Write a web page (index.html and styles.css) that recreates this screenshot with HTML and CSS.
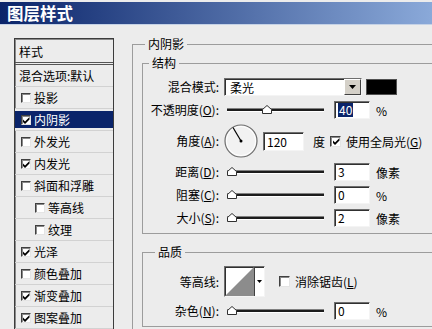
FILE: index.html
```html
<!DOCTYPE html>
<html lang="zh-CN">
<head>
    <meta charset="UTF-8">
    <meta name="viewport" content="width=device-width, initial-scale=1.0">
    <title>图层样式</title>
    <link rel="stylesheet" href="styles.css">
</head>
<body>
    <div class="titlebar">图层样式</div>

    <div class="dialog">
        <!-- left: list of effects -->
        <div class="styles-list">
            <div class="list-head">样式</div>
            <div class="list-item blend">混合选项:默认</div>
            <div class="list-item"><span class="check"></span>投影</div>
            <div class="list-item selected"><span class="check on"><svg width="7" height="7" viewBox="0 0 7 7"><path d="M0 2.5 L2 4.5 L6.5 0 L6.5 2.5 L2 7 L0 5 Z"/></svg></span>内阴影</div>
            <div class="list-item"><span class="check"></span>外发光</div>
            <div class="list-item"><span class="check on"><svg width="7" height="7" viewBox="0 0 7 7"><path d="M0 2.5 L2 4.5 L6.5 0 L6.5 2.5 L2 7 L0 5 Z"/></svg></span>内发光</div>
            <div class="list-item"><span class="check"></span>斜面和浮雕</div>
            <div class="list-item sub"><span class="check"></span>等高线</div>
            <div class="list-item sub"><span class="check"></span>纹理</div>
            <div class="list-item"><span class="check on"><svg width="7" height="7" viewBox="0 0 7 7"><path d="M0 2.5 L2 4.5 L6.5 0 L6.5 2.5 L2 7 L0 5 Z"/></svg></span>光泽</div>
            <div class="list-item"><span class="check"></span>颜色叠加</div>
            <div class="list-item"><span class="check on"><svg width="7" height="7" viewBox="0 0 7 7"><path d="M0 2.5 L2 4.5 L6.5 0 L6.5 2.5 L2 7 L0 5 Z"/></svg></span>渐变叠加</div>
            <div class="list-item"><span class="check on"><svg width="7" height="7" viewBox="0 0 7 7"><path d="M0 2.5 L2 4.5 L6.5 0 L6.5 2.5 L2 7 L0 5 Z"/></svg></span>图案叠加</div>
        </div>

        <!-- right: inner shadow settings -->
        <fieldset class="effect">
            <legend>内阴影</legend>

            <fieldset class="group structure">
                <legend>结构</legend>
                <div class="row">
                    <span class="label">混合模式:</span>
                    <div class="select">
                        <span>柔光</span>
                        <span class="drop"><svg width="7" height="4" viewBox="0 0 7 4"><path d="M0 0 H7 L3.5 4 Z"/></svg></span>
                    </div>
                    <span class="swatch"></span>
                </div>
                <div class="row">
                    <span class="label">不透明度(<u>O</u>):</span>
                    <div class="slider"><svg class="thumb" style="left: 35px" width="10" height="9" viewBox="0 0 10 9"><path d="M0.5 8.5 V4.5 L5 0.5 L9.5 4.5 V8.5 Z"/></svg></div>
                    <div class="field"><span class="hl">40</span></div>
                    <span class="unit">%</span>
                </div>
                <div class="row angle">
                    <span class="label">角度(<u>A</u>):</span>
                    <svg class="dial" width="34" height="34" viewBox="0 0 34 34">
                        <circle cx="17" cy="17" r="16" fill="#f2f2f2" stroke="#6e6e6e" stroke-width="1.2"/>
                        <circle cx="17" cy="17" r="14.6" fill="none" stroke="#ffffff" stroke-width="1"/>
                        <line x1="17" y1="17" x2="9" y2="3.5" stroke="#000" stroke-width="1.2"/>
                        <circle cx="17" cy="17" r="1.5" fill="#000"/>
                    </svg>
                    <div class="field wide">120</div>
                    <span class="unit deg">度</span>
                    <span class="check on"><svg width="7" height="7" viewBox="0 0 7 7"><path d="M0 2.5 L2 4.5 L6.5 0 L6.5 2.5 L2 7 L0 5 Z"/></svg></span>
                    <span class="check-text">使用全局光(<u>G</u>)</span>
                </div>
                <div class="row">
                    <span class="label">距离(<u>D</u>):</span>
                    <div class="slider"><svg class="thumb" width="10" height="9" viewBox="0 0 10 9"><path d="M0.5 8.5 V4.5 L5 0.5 L9.5 4.5 V8.5 Z"/></svg></div>
                    <div class="field">3</div>
                    <span class="unit">像素</span>
                </div>
                <div class="row">
                    <span class="label">阻塞(<u>C</u>):</span>
                    <div class="slider"><svg class="thumb" width="10" height="9" viewBox="0 0 10 9"><path d="M0.5 8.5 V4.5 L5 0.5 L9.5 4.5 V8.5 Z"/></svg></div>
                    <div class="field">0</div>
                    <span class="unit">%</span>
                </div>
                <div class="row">
                    <span class="label">大小(<u>S</u>):</span>
                    <div class="slider"><svg class="thumb" width="10" height="9" viewBox="0 0 10 9"><path d="M0.5 8.5 V4.5 L5 0.5 L9.5 4.5 V8.5 Z"/></svg></div>
                    <div class="field">2</div>
                    <span class="unit">像素</span>
                </div>
            </fieldset>

            <fieldset class="group quality">
                <legend>品质</legend>
                <div class="row contour-row">
                    <span class="label">等高线:</span>
                    <div class="contour">
                        <svg width="29" height="29" viewBox="0 0 29 29"><path d="M0 29 L29 0 V29 Z" fill="#8c8c8c"/></svg>
                        <span class="contour-drop"><svg width="5" height="3" viewBox="0 0 5 3"><path d="M0 0 H5 L2.5 3 Z"/></svg></span>
                    </div>
                    <span class="check aa"></span>
                    <span class="check-text">消除锯齿(<u>L</u>)</span>
                </div>
                <div class="row">
                    <span class="label">杂色(<u>N</u>):</span>
                    <div class="slider"><svg class="thumb" width="10" height="9" viewBox="0 0 10 9"><path d="M0.5 8.5 V4.5 L5 0.5 L9.5 4.5 V8.5 Z"/></svg></div>
                    <div class="field">0</div>
                    <span class="unit">%</span>
                </div>
            </fieldset>
        </fieldset>
    </div>
</body>
</html>
```

FILE: styles.css
```css
* {
    box-sizing: border-box;
}

body {
    margin: 0;
    width: 432px;
    height: 329px;
    overflow: hidden;
    background-color: #ececec;
    font-family: "Noto Sans CJK SC", sans-serif;
    font-size: 12px;
    color: #000;
}

/* window caption */
.titlebar {
    margin-top: 2px;
    height: 23px;
    padding-left: 7px;
    background: linear-gradient(to right, #0a246a, #8aa9d9);
    border-bottom: 1px solid #c5d2e6;
    color: #fff;
    font-size: 16.5px;
    font-weight: bold;
    line-height: 22px;
}

.dialog {
    display: flex;
    align-items: flex-start;
    padding-left: 14px;
}

/* effects list */
.styles-list {
    flex: none;
    width: 100px;
    height: 300px;
    margin-top: 13px;
    border: 1px solid #3c3c3c;
    box-shadow: inset 1px 1px 0 #8a8a8a;
}

.list-head {
    height: 26px;
    padding: 2px 0 0 4px;
    line-height: 21px;
    border-bottom: 3px double #555;
}

.list-item {
    display: flex;
    align-items: center;
    height: 22px;
    padding-left: 6px;
    border-bottom: 1px solid #d2d2d2;
    white-space: nowrap;
}

.list-item.blend {
    padding-left: 4px;
}

.list-item.sub {
    padding-left: 20px;
}

.list-item.selected {
    background-color: #0a246a;
    box-shadow: inset 0 2px 0 #ececec, inset 0 -2px 0 #ececec;
    color: #fff;
}

.list-item .check {
    width: 10px;
    height: 10px;
    margin-right: 3px;
}

/* checkbox */
.check {
    flex: none;
    display: flex;
    align-items: center;
    justify-content: center;
    width: 11px;
    height: 11px;
    background: #fff;
    border: 1px solid;
    border-color: #404040 #e4e4e4 #e4e4e4 #404040;
    box-shadow: inset 1px 1px 0 #8a8a8a;
}

.check svg {
    fill: #000;
    margin: 1px 0 0 1px;
}

.check-text {
    margin-left: 5px;
    white-space: nowrap;
}

/* right side */
.effect {
    flex: none;
    width: 330px;
    margin: 11px 0 0 18px;
    padding: 3px 0 10px 9px;
    border: 1px solid #9c9c9c;
    min-width: 0;
}

legend {
    padding: 0 3px;
    margin-left: 3px;
    line-height: 16px;
}

.group {
    width: 100%;
    margin: 0;
    padding: 7px 0 6px 0;
    border: 1px solid #9c9c9c;
    min-width: 0;
}

.structure legend {
    margin-left: 6px;
}

.quality {
    margin-top: 10px;
    padding-top: 6px;
}

.quality legend {
    margin-left: 12px;
}

.row {
    display: flex;
    align-items: center;
    height: 18px;
    margin-top: 5px;
    white-space: nowrap;
}

.row:first-of-type {
    margin-top: 0;
}

.row.angle {
    height: 34px;
}

.row.contour-row {
    height: 31px;
}

.label {
    flex: none;
    width: 76px;
    text-align: right;
    line-height: 18px;
}

/* sunken boxes */
.select, .field, .contour {
    background: #fff;
    border: 1px solid;
    border-color: #6e6e6e #f4f4f4 #f4f4f4 #6e6e6e;
    box-shadow: inset 1px 1px 0 #303030;
}

.select {
    flex: none;
    display: flex;
    align-items: center;
    width: 138px;
    height: 18px;
    margin-left: 5px;
    padding-left: 5px;
}

.drop {
    display: flex;
    align-items: center;
    justify-content: center;
    width: 17px;
    height: 16px;
    margin-left: auto;
    background: #d4d0c8;
    border: 1px solid;
    border-color: #fff #404040 #404040 #fff;
}

.swatch {
    flex: none;
    width: 31px;
    height: 16px;
    margin-left: 4px;
    background: #000;
    border: 1px solid #505050;
}

.slider {
    position: relative;
    flex: none;
    width: 97px;
    height: 4px;
    margin-left: 8px;
    background: #1c1c1c;
    border-top: 1px solid #808080;
    border-bottom: 1px solid #fff;
}

.thumb {
    position: absolute;
    top: -4px;
    left: 0;
    fill: #fff;
    stroke: #303030;
    stroke-width: 1;
}

.field {
    flex: none;
    width: 36px;
    height: 18px;
    margin-left: 10px;
    padding-left: 3px;
    line-height: 16px;
}

.field.wide {
    width: 41px;
    height: 19px;
    margin-left: 5px;
    line-height: 17px;
}

.hl {
    display: inline-block;
    padding: 0 1px;
    background: #0a246a;
    color: #fff;
    line-height: 14px;
}

.unit {
    margin-left: 6px;
}

.unit.deg {
    margin-left: 9px;
    margin-right: 5px;
}

.dial {
    flex: none;
    margin-left: 5px;
}

.contour {
    flex: none;
    display: flex;
    width: 41px;
    height: 31px;
    margin-left: 5px;
}

.contour-drop {
    display: flex;
    align-items: center;
    justify-content: center;
    flex: 1;
    border-left: 1px solid #404040;
}

.check.aa {
    margin-left: 14px;
}
```
